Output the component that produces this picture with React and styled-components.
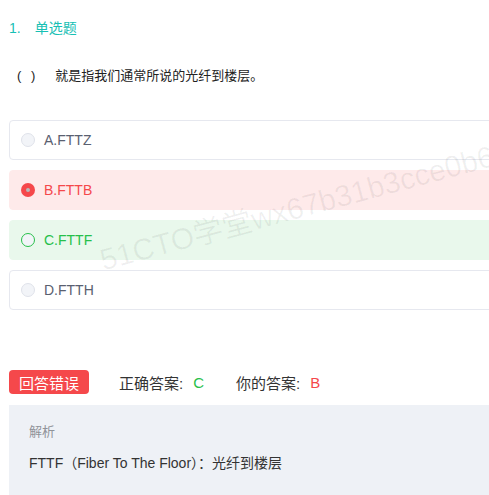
import React from 'react';
import styled, { createGlobalStyle } from 'styled-components';

const Global = createGlobalStyle`
  html, body {
    margin: 0;
    padding: 0;
    background: #fff;
    overflow: hidden;
  }
  body {
    font-family: "Liberation Sans", "Noto Sans CJK SC", sans-serif;
  }
`;

const Page = styled.div`
  position: relative;
  width: 540px;
  height: 495px;
  padding-left: 9px;
  box-sizing: border-box;
  overflow: hidden;
`;

const Title = styled.div`
  display: flex;
  gap: 14px;
  padding-top: 18px;
  font-size: 14px;
  line-height: 20px;
  color: #17c0b4;
`;

const Question = styled.div`
  display: flex;
  gap: 17px;
  margin-top: 28px;
  padding-left: 8px;
  font-size: 13px;
  line-height: 20px;
  color: #222;
`;

const Blank = styled.span`
  letter-spacing: 3px;
`;

const Options = styled.div`
  display: flex;
  flex-direction: column;
  gap: 10px;
  margin-top: 34px;
`;

const tone = {
  idle: { bg: '#fff', border: '#e6e8ef', text: '#5a6070' },
  wrong: { bg: '#feeaea', border: '#feeaea', text: '#f5484b' },
  right: { bg: '#e9f8ec', border: '#e9f8ec', text: '#27c04a' },
};

const Option = styled.div`
  display: flex;
  align-items: center;
  gap: 9px;
  height: 40px;
  box-sizing: border-box;
  padding-left: 11px;
  border: 1px solid ${p => tone[p.$state].border};
  border-radius: 4px;
  background: ${p => tone[p.$state].bg};
  color: ${p => tone[p.$state].text};
  font-size: 14px;
`;

const Radio = styled.span`
  position: relative;
  width: 14px;
  height: 14px;
  border-radius: 50%;
  box-sizing: border-box;
  flex: none;
  border: ${p => p.$state === 'right' ? '1.5px solid #27c04a' : p.$state === 'wrong' ? 'none' : '1px solid #dfe2ea'};
  background: ${p => p.$state === 'wrong' ? '#f5484b' : '#f2f4f8'};
  ${p => p.$state === 'wrong' && `
    &::after {
      content: '';
      position: absolute;
      left: 5px;
      top: 5px;
      width: 4px;
      height: 4px;
      border-radius: 50%;
      background: #b9b9b9;
    }
  `}
`;

const Result = styled.div`
  display: flex;
  align-items: center;
  margin-top: 60px;
  font-size: 15px;
  color: #333;
`;

const Tag = styled.span`
  display: inline-flex;
  align-items: center;
  justify-content: center;
  width: 80px;
  height: 24px;
  border-radius: 4px;
  background: #f5484b;
  color: #fff;
  font-size: 15px;
  margin-right: 30px;
`;

const Label = styled.span`
  margin-right: ${p => p.$gap || 0}px;
`;

const Letter = styled.span`
  color: ${p => p.$color};
  margin-left: 10px;
  margin-right: ${p => p.$gap || 0}px;
`;

const Analysis = styled.div`
  margin-top: 11px;
  height: 100px;
  background: #eef1f6;
  padding: 18px 20px;
  box-sizing: border-box;
`;

const AnalysisHead = styled.div`
  font-size: 13px;
  line-height: 18px;
  color: #909399;
`;

const AnalysisBody = styled.div`
  margin-top: 12px;
  font-size: 14px;
  line-height: 20px;
  color: #333;
`;

const Watermark = styled.div`
  position: absolute;
  left: 100px;
  top: 236px;
  transform: rotate(-15deg);
  transform-origin: left center;
  font-size: 30px;
  color: rgba(0, 0, 0, 0.06);
  white-space: nowrap;
  pointer-events: none;
`;

const options = [
  { key: 'A', text: 'A.FTTZ', state: 'idle' },
  { key: 'B', text: 'B.FTTB', state: 'wrong' },
  { key: 'C', text: 'C.FTTF', state: 'right' },
  { key: 'D', text: 'D.FTTH', state: 'idle' },
];

export default function App() {
  return (
    <>
      <Global />
      <Page>
        <Title>
          <span>1.</span>
          <span>单选题</span>
        </Title>
        <Question>
          <Blank>( )</Blank>
          <span>就是指我们通常所说的光纤到楼层。</span>
        </Question>
        <Options>
          {options.map(o => (
            <Option key={o.key} $state={o.state}>
              <Radio $state={o.state} />
              {o.text}
            </Option>
          ))}
        </Options>
        <Result>
          <Tag>回答错误</Tag>
          <Label>正确答案:</Label>
          <Letter $color="#27c04a" $gap={32}>C</Letter>
          <Label>你的答案:</Label>
          <Letter $color="#f5484b">B</Letter>
        </Result>
        <Analysis>
          <AnalysisHead>解析</AnalysisHead>
          <AnalysisBody>FTTF（Fiber To The Floor）：光纤到楼层</AnalysisBody>
        </Analysis>
        <Watermark>51CTO学堂wx67b31b3cce0b6e</Watermark>
      </Page>
    </>
  );
}
